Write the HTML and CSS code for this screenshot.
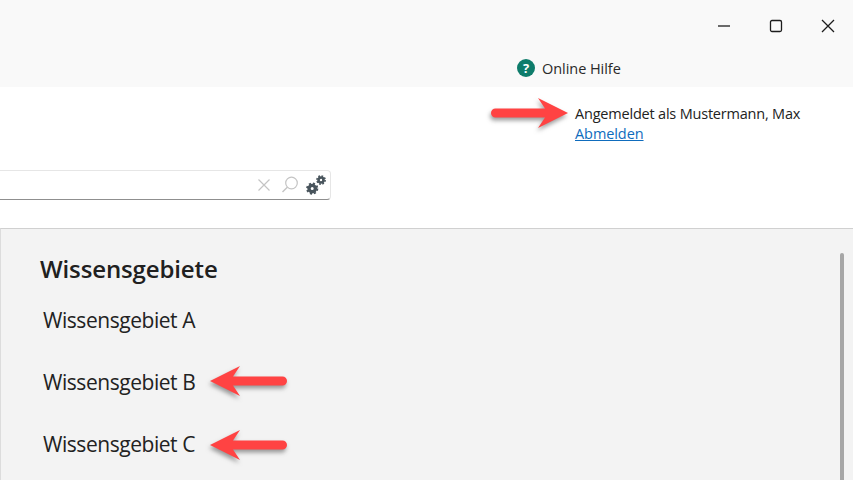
FILE: index.html
```html
<!DOCTYPE html>
<html lang="de">
<head>
<meta charset="utf-8">
<title>Wissensgebiete</title>
<link rel="stylesheet" href="styles.css">
</head>
<body>
<div class="app">
  <header class="titlebar">
    <div class="winctrls">
      <svg class="winbtn" width="16" height="16" viewBox="0 0 16 16"><path d="M2 8h12" class="wstroke"/></svg>
      <svg class="winbtn" width="16" height="16" viewBox="0 0 16 16"><rect x="2.5" y="2.5" width="11" height="11" rx="1.5" class="wstroke"/></svg>
      <svg class="winbtn" width="16" height="16" viewBox="0 0 16 16"><path d="M2 2l12 12M14 2L2 14" class="wstroke"/></svg>
    </div>
    <div class="helprow">
      <svg class="helpicon" width="18" height="18" viewBox="0 0 18 18"><circle cx="9" cy="9" r="9" fill="#0e7c6b"/><text x="9" y="13.5" class="helpq">?</text></svg>
      <span class="helptext">Online Hilfe</span>
    </div>
  </header>
  <section class="head">
    <div class="userrow">
      <div class="user">
        <div>Angemeldet als Mustermann, Max</div>
        <a href="#" class="logout">Abmelden</a>
      </div>
    </div>
    <div class="search">
      <svg width="14" height="14" viewBox="0 0 14 14" class="clear"><path d="M1.5 1.5l11 11M12.5 1.5l-11 11" fill="none" stroke="#c4c4c4" stroke-width="1.2"/></svg>
      <svg width="18" height="18" viewBox="0 0 18 18" class="lens"><circle cx="10.5" cy="7" r="5.8" fill="none" stroke="#c4c4c4" stroke-width="1.2"/><path d="M6.3 11.2L1.5 16" stroke="#c4c4c4" stroke-width="1.4"/></svg>
      <svg width="20" height="20" viewBox="0 0 20 20" class="gears">
        <g fill="none" stroke="#48545c">
          <circle cx="6.2" cy="13.6" r="3.2" stroke-width="3.4"/>
          <circle cx="6.2" cy="13.6" r="5.2" stroke-width="1.8" stroke-dasharray="2.1 2"/>
          <circle cx="15" cy="5" r="2.5" stroke-width="2.6"/>
          <circle cx="15" cy="5" r="4.1" stroke-width="1.6" stroke-dasharray="1.7 1.52"/>
        </g>
      </svg>
    </div>
  </section>
  <main class="panel">
    <div class="content">
      <h1 class="title">Wissensgebiete</h1>
      <ul class="list">
        <li>Wissensgebiet A</li>
        <li>Wissensgebiet B</li>
        <li>Wissensgebiet C</li>
      </ul>
    </div>
    <div class="scrollbar"></div>
  </main>

  <svg class="arrow arrow-top" width="84" height="38" viewBox="0 0 84 38"><use href="#arrowshape"/></svg>
  <svg class="arrow arrow-b" width="84" height="38" viewBox="0 0 84 38"><use href="#arrowshape" transform="translate(84 0) scale(-1 1)"/></svg>
  <svg class="arrow arrow-c" width="84" height="38" viewBox="0 0 84 38"><use href="#arrowshape" transform="translate(84 0) scale(-1 1)"/></svg>
  <svg class="defs" width="0" height="0">
    <defs>
      <g id="arrowshape">
        <path d="M4.5 12.5H54L47 2l30 15-30 15 7-10.5H4.5a4.5 4.5 0 0 1 0-9z" fill="#ff4343"/>
      </g>
    </defs>
  </svg>
</div>
</body>
</html>
```
FILE: styles.css
```css
* { box-sizing: border-box; }
html, body { margin: 0; padding: 0; }
body { width: 853px; height: 480px; overflow: hidden; background: #fff; color: #1f1f1f; font-family: "Open Sans", "Noto Sans", sans-serif; }
.app { position: relative; width: 853px; height: 480px; display: flex; flex-direction: column; overflow: hidden; }
.titlebar { height: 87px; background: #f9f9f9; display: flex; flex-direction: column; }
.winctrls { display: flex; justify-content: flex-end; gap: 36px; padding: 18px 17px 0 0; height: 58px; }
.wstroke { fill: none; stroke: #1c1c1c; stroke-width: 1.3; }
.winbtn { display: block; }
.helprow { display: flex; align-items: center; gap: 7px; padding-left: 517px; height: 20px; }
.helpicon { display: block; }
.helpq { font: bold 13px "Open Sans", sans-serif; fill: #fff; text-anchor: middle; }
.helptext { font-size: 14.5px; letter-spacing: -0.05px; color: #2a2a2a; }
.head { height: 141px; display: flex; flex-direction: column; }
.userrow { display: flex; padding: 17px 0 0 575px; height: 83px; }
.user { font-size: 14.5px; line-height: 20px; letter-spacing: -0.2px; color: #222; }
.logout { color: #0f6cbd; text-decoration: underline; letter-spacing: -0.08px; }
.search { width: 331px; height: 30px; border: 1px solid #e6e6e6; border-left: 0; border-bottom: 1.5px solid #8f8f8f; border-radius: 0 4px 4px 0; display: flex; align-items: center; justify-content: flex-end; padding-right: 4px; background: #fff; }
.clear { margin-right: 11px; }
.lens { margin-right: 7px; margin-left: -1px; }
.gears { margin-top: -1px; }
.panel { flex: 1; background: #f3f3f3; border-top: 1px solid #d0d0d0; border-left: 1px solid #dcdcdc; display: flex; justify-content: space-between; }
.content { padding: 22px 0 0 39px; }
.title { margin: 0; font-size: 24px; line-height: 36px; font-weight: 600; letter-spacing: -0.13px; color: #202020; }
.list { list-style: none; margin: 18px 0 0 3px; padding: 0; font-size: 21px; line-height: 30px; letter-spacing: -0.45px; color: #222; display: flex; flex-direction: column; gap: 32px; }
.scrollbar { width: 4px; height: 227px; margin: 24px 9px 0 0; background: #a6a6a6; border-radius: 2px 2px 0 0; }
.arrow { position: absolute; display: block; overflow: visible; filter: drop-shadow(-1px 3px 2px rgba(60, 60, 60, .5)); }
.arrow-top { left: 491px; top: 96px; }
.arrow-b { left: 203px; top: 364px; }
.arrow-c { left: 203px; top: 428px; }
.defs { position: absolute; }
```
